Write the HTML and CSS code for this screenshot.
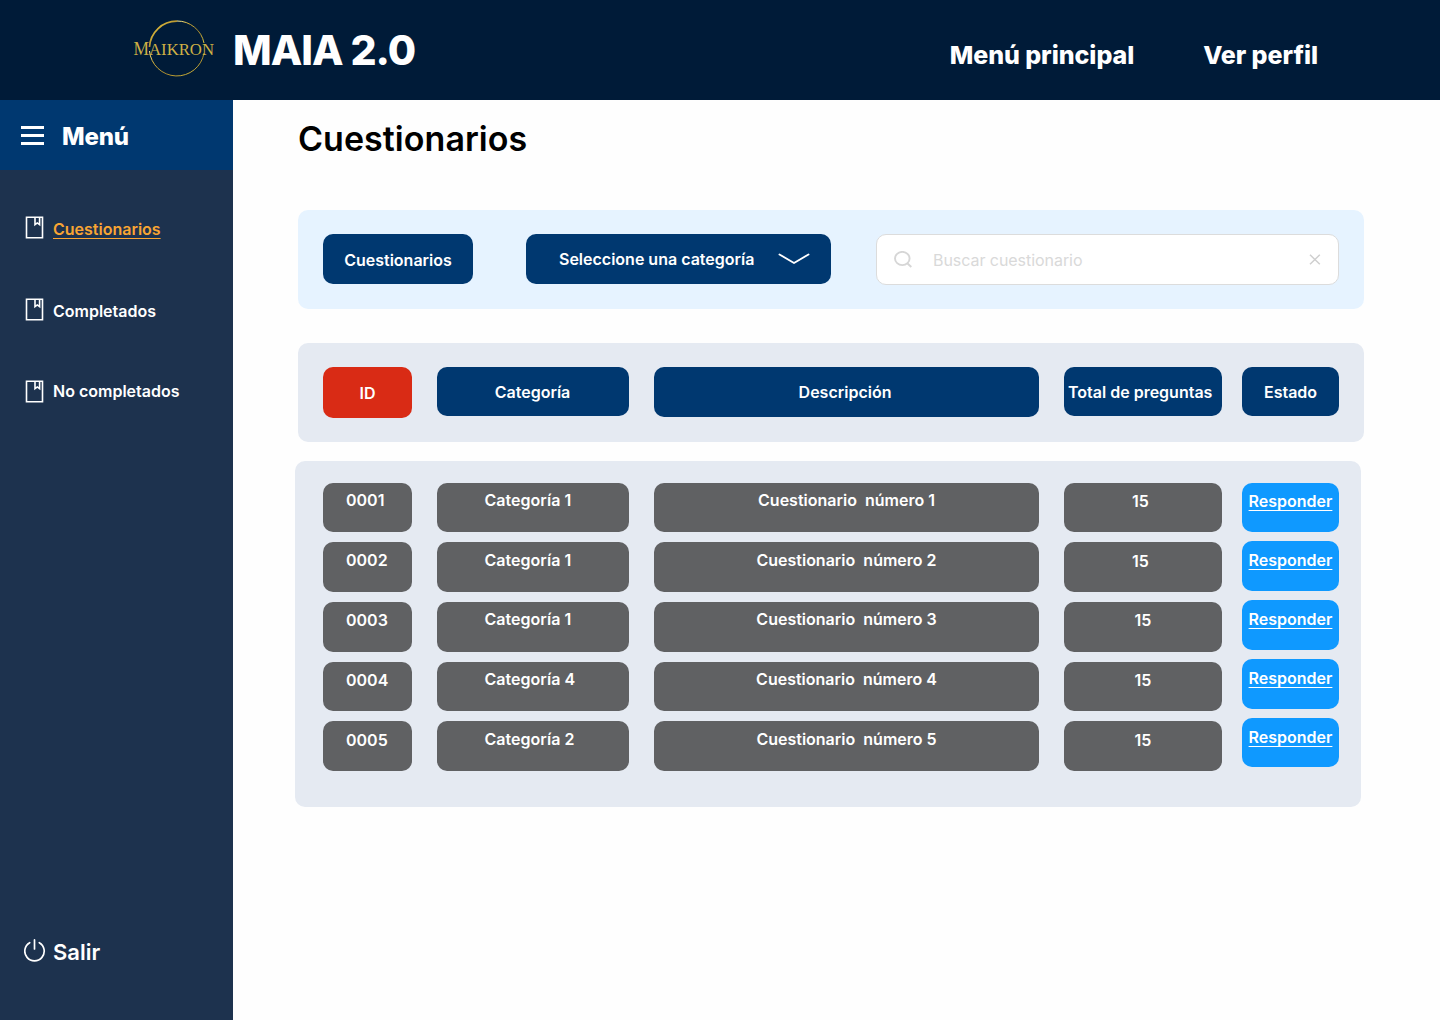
FILE: index.html
```html
<!DOCTYPE html>
<html lang="es">
<head>
<meta charset="utf-8">
<title>MAIA 2.0</title>
<link rel="stylesheet" href="styles.css">
</head>
<body>
<header class="topbar">
  <svg class="logo" width="82" height="60" viewBox="0 0 82 60">
    <defs>
      <linearGradient id="gold" x1="0" y1="0" x2="1" y2="1">
        <stop offset="0" stop-color="#fff3a0"/><stop offset=".25" stop-color="#d9b53a"/>
        <stop offset=".6" stop-color="#a88a2e"/><stop offset="1" stop-color="#e0c53c"/>
      </linearGradient>
    </defs>
    <g fill="none" stroke="url(#gold)">
      <path d="M71 25A27.500 27.500 0 0 0 44 3" stroke-width="1"/>
      <path d="M16.500 29A27.300 27.300 0 0 1 44 3.200" stroke-width="1.700"/>
      <path d="M71 35A27.500 27.500 0 0 1 16.500 33" stroke-width="1"/>
    </g>
    <g class="logo-text" fill="#cdb045">
      <text x="0.500" y="36.500" font-size="19" textLength="15.500" lengthAdjust="spacingAndGlyphs">M</text>
      <text x="16" y="36.500" font-size="17" textLength="65" lengthAdjust="spacingAndGlyphs">AIKRON</text>
    </g>
  </svg>
  <h1 class="brand">MAIA 2.0</h1>
  <nav class="topnav"><a>Menú principal</a><a>Ver perfil</a></nav>
</header>
<div class="body">
  <aside class="sidebar">
    <div class="menu-head">
      <svg width="23" height="20" viewBox="0 0 23 20"><path d="M0 1.500h23M0 9.500h23M0 17.500h23" stroke="#fff" stroke-width="3"/></svg>
      <span>Menú</span>
    </div>
    <ul class="side-list">
      <li><svg class="book" width="20" height="24" viewBox="0 0 20 24"><path d="M1.500 2.200h16v20.500h-16zM10 2.200v7.500l2.300-1.800 2.300 1.800v-7.500" fill="none" stroke="#fff" stroke-width="1.600"/></svg><a class="active">Cuestionarios</a></li>
      <li><svg class="book" width="20" height="24" viewBox="0 0 20 24"><path d="M1.500 2.200h16v20.500h-16zM10 2.200v7.500l2.300-1.800 2.300 1.800v-7.500" fill="none" stroke="#fff" stroke-width="1.600"/></svg><a>Completados</a></li>
      <li><svg class="book" width="20" height="24" viewBox="0 0 20 24"><path d="M1.500 2.200h16v20.500h-16zM10 2.200v7.500l2.300-1.800 2.300 1.800v-7.500" fill="none" stroke="#fff" stroke-width="1.600"/></svg><a>No completados</a></li>
    </ul>
    <a class="exit">
      <svg width="22" height="24" viewBox="0 0 22 24" fill="none" stroke="#fff" stroke-width="1.700" stroke-linecap="round"><path d="M10.500 .9v9M5.700 3.700a9.700 9.700 0 1 0 9.600 0"/></svg>
      <span>Salir</span>
    </a>
  </aside>
  <main class="content">
    <h2 class="title">Cuestionarios</h2>
    <section class="panel filters">
      <button class="btn tab">Cuestionarios</button>
      <button class="btn select"><span>Seleccione una categoría</span>
        <svg width="32" height="12" viewBox="0 0 32 12"><path d="M1.500 1.500L16 10l14.500-8.500" fill="none" stroke="#fff" stroke-width="1.900" stroke-linecap="round" stroke-linejoin="round"/></svg>
      </button>
      <div class="search">
        <svg width="18" height="17" viewBox="0 0 18 17" fill="none" stroke="#d6d6d6" stroke-width="1.900"><ellipse cx="8.300" cy="7.500" rx="7.300" ry="6.600"/><path d="M13 12l4.300 4"/></svg>
        <span>Buscar cuestionario</span>
        <svg class="clear" width="12" height="11" viewBox="0 0 12 11"><path d="M1 .8l9.800 9.400M10.800.8L1 10.200" stroke="#cfcfcf" stroke-width="1.500"/></svg>
      </div>
    </section>
    <section class="panel heads">
      <div class="cell head id">ID</div>
      <div class="cell head cat">Categoría</div>
      <div class="cell head desc">Descripción</div>
      <div class="cell head total">Total de preguntas</div>
      <div class="cell head state">Estado</div>
    </section>
    <section class="panel rows">
      <div class="col id"><div class="cell">0001</div><div class="cell">0002</div><div class="cell">0003</div><div class="cell">0004</div><div class="cell">0005</div></div>
      <div class="col cat"><div class="cell">Categoría 1</div><div class="cell">Categoría 1</div><div class="cell">Categoría 1</div><div class="cell">Categoría 4</div><div class="cell">Categoría 2</div></div>
      <div class="col desc"><div class="cell">Cuestionario&nbsp; número 1</div><div class="cell">Cuestionario&nbsp; número 2</div><div class="cell">Cuestionario&nbsp; número 3</div><div class="cell">Cuestionario&nbsp; número 4</div><div class="cell">Cuestionario&nbsp; número 5</div></div>
      <div class="col total"><div class="cell near">15</div><div class="cell near">15</div><div class="cell">15</div><div class="cell">15</div><div class="cell">15</div></div>
      <div class="col state"><a class="cell">Responder</a><a class="cell">Responder</a><a class="cell">Responder</a><a class="cell">Responder</a><a class="cell">Responder</a></div>
    </section>
  </main>
</div>
</body>
</html>
```
FILE: styles.css
```css
* { box-sizing: border-box; }
body { margin: 0; background: #fff; font-family: Inter, sans-serif; font-size: 16px; font-weight: 600; line-height: 20px; color: #fff; }
h1, h2, ul { margin: 0; padding: 0; }
svg { display: block; flex: none; }
.topbar { height: 100px; background: #001b38; display: flex; align-items: flex-start; padding: 18px 122px 0 133px; }
.logo-text { font-family: "Liberation Serif", serif; font-weight: 400; }
.brand { margin: 7px 0 0 18px; font-size: 41px; line-height: 50px; font-weight: 800; letter-spacing: -1px; white-space: nowrap; }
.topnav { display: flex; gap: 69px; margin: 21px 0 0 auto; font-size: 25px; line-height: 32px; font-weight: 800; letter-spacing: -.05px; white-space: nowrap; }
.body { display: flex; height: 920px; background: #fefefe; }
.sidebar { flex: none; width: 233px; background: #1d324e; display: flex; flex-direction: column; }
.menu-head { height: 70px; background: #003870; display: flex; align-items: center; gap: 18px; padding: 2px 0 0 21px; font-size: 24px; line-height: 30px; font-weight: 800; letter-spacing: -.2px; }
.menu-head span { margin-top: 2px; }
.side-list { list-style: none; padding: 45px 0 0 25px; display: flex; flex-direction: column; gap: 58px; }
.side-list li { display: flex; gap: 8px; height: 24px; }
.side-list a { margin-top: 4px; }
.side-list li:nth-child(3) a { margin-top: 2px; }
.active { color: #f9a533; text-decoration: underline; text-underline-offset: 3px; }
.exit { display: flex; gap: 7px; margin: auto 0 53px 24px; align-items: center; font-size: 22px; line-height: 30px; }
.exit svg { margin-top: -2px; }
.content { flex: none; width: 1207px; padding: 18px 76px 0 65px; color: #000; }
.title { font-size: 34px; line-height: 42px; font-weight: 600; letter-spacing: .04px; }
.panel { border-radius: 10px; display: flex; align-items: flex-start; color: #fff; }
.panel > * { flex: none; }
.filters { height: 99px; margin-top: 49.500px; padding: 25px; background: #e6f3ff; }
.btn { font: inherit; color: inherit; border: 0; height: 50px; border-radius: 10px; background: #003870; padding: 1px 0 0; }
.tab { width: 150px; }
.select { width: 305px; margin-left: 53px; display: flex; align-items: center; padding: 0 0 0 33px; gap: 24px; }
.search { width: 463px; height: 51px; margin: -.5px 0 0 45px; border: 1px solid #dcdcdc; border-radius: 10px; background: #fff; color: #d9d9d9; font-weight: 400; display: flex; align-items: center; padding: 0 17px; }
.filters > .btn { margin-top: -.5px; }
.search span { margin-left: 21px; letter-spacing: -.05px; }
.clear { margin-left: auto; }
.heads { height: 99px; margin-top: 34px; padding: 24px 25px; background: #e5eaf2; }
.id { width: 89px; margin-right: 25px; }
.cat { width: 192px; margin-right: 25px; }
.desc { width: 385px; margin-right: 25px; }
.total { width: 158px; margin-right: 20px; }
.state { width: 97px; }
.cell { height: 49.700px; border-radius: 10px; text-align: center; background: #606163; padding-top: 8px; white-space: nowrap; }
.head { background: #003870; padding-top: 15.400px; }
.head.id { height: 51px; background: #d92b15; padding-top: 16.400px; }
.head.desc { margin-top: .6px; padding: 14.800px 3px 0 0; }
.head.cat { padding-right: 1px; }
.head.total { text-align: left; padding-left: 4px; }
.rows { width: 1066px; height: 346.500px; margin: 19px 0 0 -3px; padding: 22px 0 0 28px; background: #e5eaf2; }
.col { display: flex; flex-direction: column; gap: 10px; }
.col.id .cell { text-align: left; padding-left: 23px; }
.col.id .cell:nth-child(1), .col.cat .cell, .col.desc .cell { padding-top: 7.400px; }
.col.id .cell:nth-child(5) { padding-top: 8.600px; }
.col.cat .cell { text-align: left; padding-left: 47.400px; letter-spacing: .05px; }
.col.total .cell { padding-top: 8.600px; }
.col.total .near { padding-right: 5px; }
.col.state { gap: 9.100px; }
.col.state .cell { background: #0f99ff; padding-top: 8.900px; text-decoration: underline; text-underline-offset: 3px; }
.active, .col.state .cell { text-decoration-skip-ink: none; }
```
